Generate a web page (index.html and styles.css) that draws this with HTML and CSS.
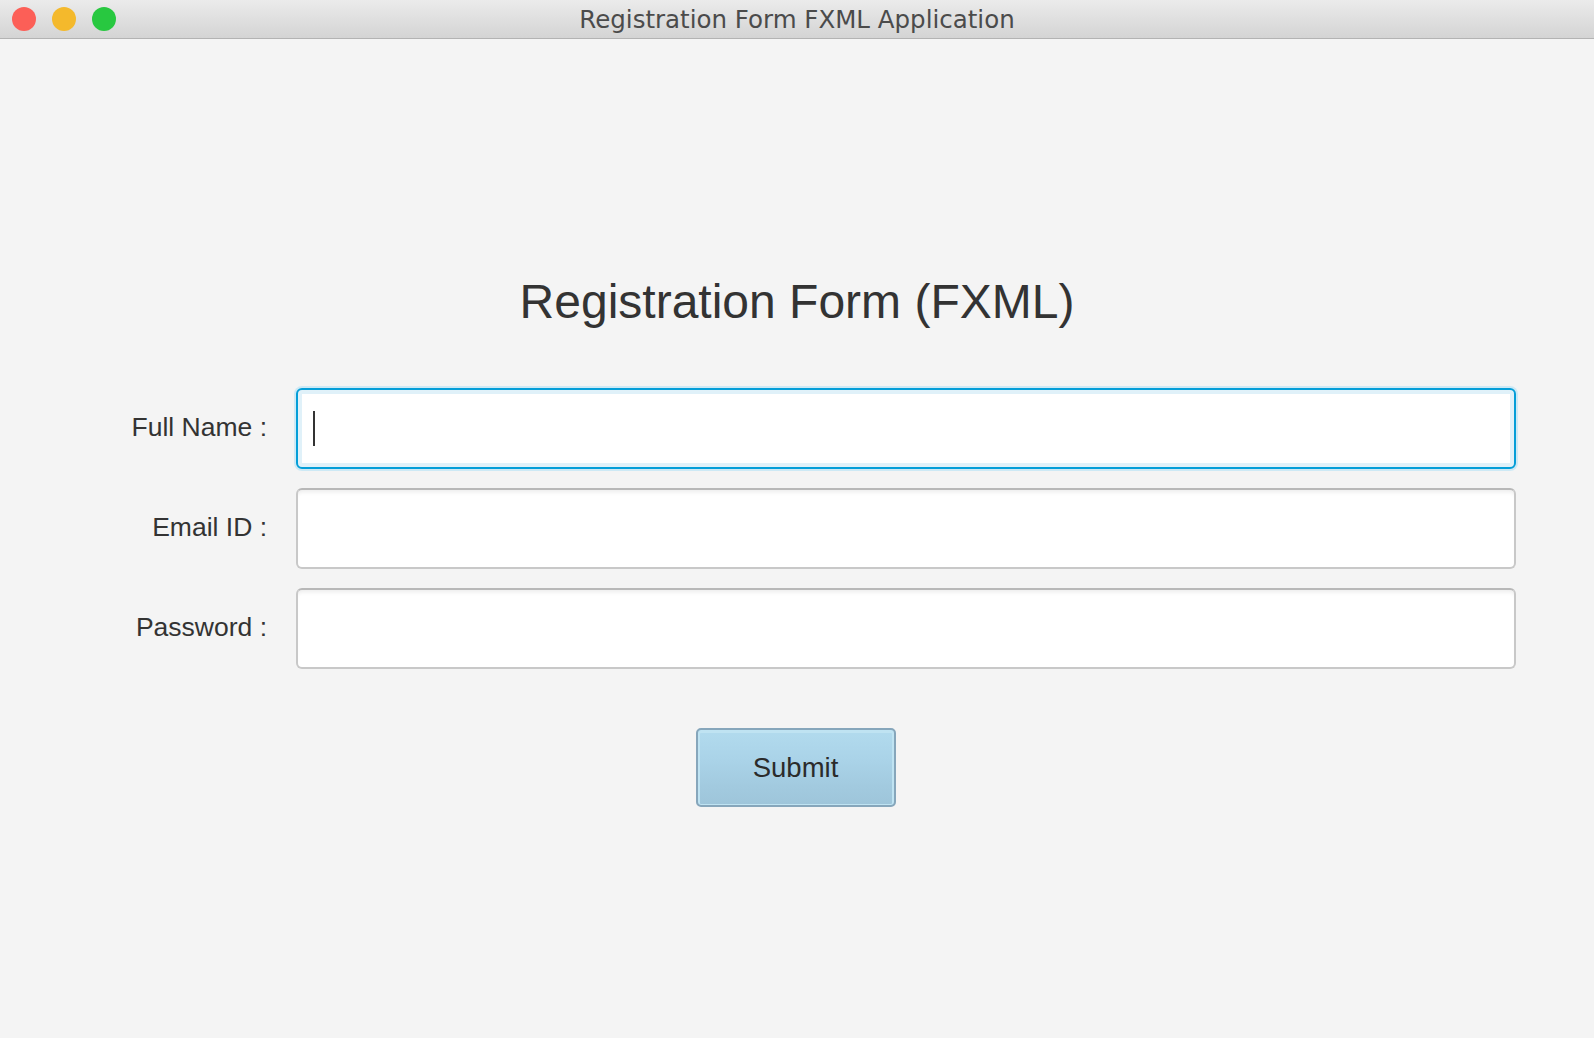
FILE: index.html
```html
<!DOCTYPE html>
<html lang="en">
<head>
<meta charset="utf-8">
<title>Registration Form FXML Application</title>
<link rel="stylesheet" href="styles.css">
</head>
<body>
<div class="window">
  <header class="titlebar">
    <div class="lights">
      <span class="light red"></span>
      <span class="light yellow"></span>
      <span class="light green"></span>
    </div>
    <div class="wintitle">Registration Form FXML Application</div>
    <div class="spacer"></div>
  </header>
  <main class="content">
    <h1 class="heading">Registration Form (FXML)</h1>
    <form class="form">
      <label class="label">Full Name :</label>
      <div class="field focused"><span class="caret"></span></div>
      <label class="label">Email ID :</label>
      <div class="field"></div>
      <label class="label">Password :</label>
      <div class="field"></div>
    </form>
    <div class="actions">
      <button class="submit" type="button">Submit</button>
    </div>
  </main>
</div>
</body>
</html>
```
FILE: styles.css
```css
* { box-sizing: border-box; }
html, body { margin: 0; padding: 0; }
body {
  width: 1594px;
  height: 1038px;
  overflow: hidden;
  background: #f4f4f4;
  font-family: "Liberation Sans", Arial, sans-serif;
  color: #333;
}
.window { display: flex; flex-direction: column; height: 100%; }
.titlebar {
  height: 39px;
  display: grid;
  grid-template-columns: 1fr auto 1fr;
  align-items: center;
  background: linear-gradient(#ebebeb, #d4d4d4);
  border-bottom: 1px solid #b3b3b3;
}
.lights { display: flex; gap: 16px; padding-left: 12px; }
.light { width: 24px; height: 24px; border-radius: 50%; display: block; }
.red { background: #fc5f57; }
.yellow { background: #f4b92c; }
.green { background: #28c840; }
.wintitle {
  font-family: "DejaVu Sans", sans-serif;
  font-size: 24.5px;
  color: #4b4b4b;
  padding-top: 1px;
}
.content { flex: 1; display: flex; flex-direction: column; }
.heading {
  margin: 239px 0 0 0;
  font-size: 48px;
  line-height: 48px;
  font-weight: normal;
  text-align: center;
  color: #333;
}
.form {
  margin-top: 62px;
  display: grid;
  grid-template-columns: 267px 1fr;
  column-gap: 29px;
  row-gap: 19px;
  padding-right: 78px;
  align-items: center;
}
.label {
  text-align: right;
  font-size: 26.5px;
  color: #333;
  padding-bottom: 2px;
}
.field {
  height: 81px;
  background: #fff;
  border: 2px solid #c8c8c8;
  border-top-color: #b8b8b8;
  border-radius: 6px;
  box-shadow: inset 0 5px 4px -3px #ececec;
  display: flex;
  align-items: center;
}
.field.focused {
  border: 2px solid #049ed8;
  box-shadow: inset 0 0 0 4px #e0f1f9, 0 0 0 2px #cde9f5;
}
.caret {
  display: block;
  width: 2px;
  height: 35px;
  margin-left: 15px;
  background: #333;
}
.actions { display: flex; justify-content: center; margin-top: 59px; }
.submit {
  width: 200px;
  height: 79px;
  margin-left: -3px;
  font-family: "Liberation Sans", Arial, sans-serif;
  font-size: 27.5px;
  color: #2b2b2b;
  background: linear-gradient(#b2dbee 0%, #aad3e8 40%, #a2cadf 75%, #9ec5da 100%);
  border: 2px solid #86a6bb;
  border-radius: 5px;
  box-shadow: inset 0 1px 0 2px #bfe3f2;
  padding: 0;
}
```
